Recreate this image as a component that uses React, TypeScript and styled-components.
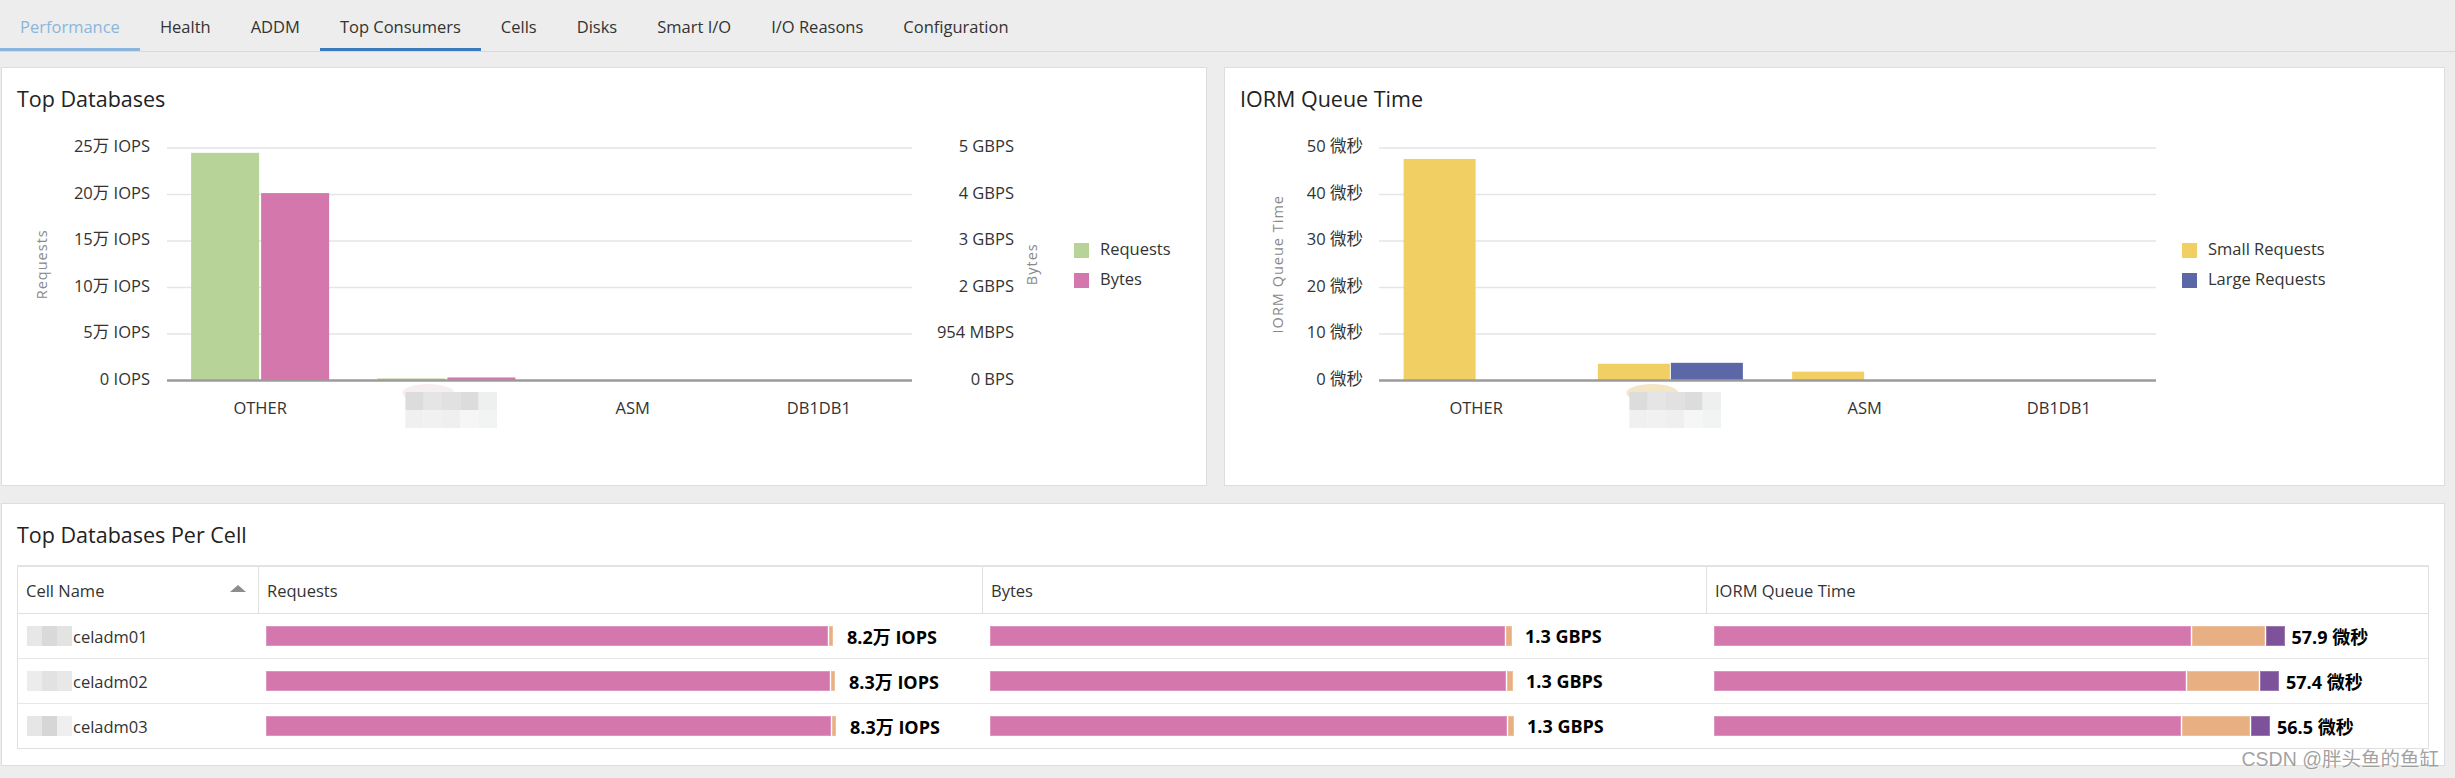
import React from 'react'
import styled, { createGlobalStyle } from 'styled-components'

const GlobalStyle = createGlobalStyle`
  html, body {
    margin: 0;
    padding: 0;
    background: #ededed;
  }
  body {
    font-family: "Open Sans", "Noto Sans CJK SC", sans-serif;
    color: #333;
  }
  * {
    box-sizing: border-box;
  }
`

const FONT = '"Open Sans", "Noto Sans CJK SC", sans-serif'

const tabs = [
  { label: 'Performance', state: 'visited' },
  { label: 'Health' },
  { label: 'ADDM' },
  { label: 'Top Consumers', state: 'active' },
  { label: 'Cells' },
  { label: 'Disks' },
  { label: 'Smart I/O' },
  { label: 'I/O Reasons' },
  { label: 'Configuration' },
] as { label: string; state?: 'active' | 'visited' }[]

type Series = { name: string; color: string; max: number; values: number[] }

type ChartConfig = {
  width: number
  plotX0: number
  plotX1: number
  barWidth: number
  barGap: number
  leftLabelX: number
  ticks: string[]
  rightLabelX?: number
  rightTicks?: string[]
  axisTitle: string
  axisTitleX: number
  rightTitle?: string
  rightTitleX?: number
  legendX: number
  categories: (string | null)[]
  series: Series[]
  smear: string
}

// vertical scale shared by both charts (px inside the svg)
const TOP = 19
const STEP = 46.5
const BASE = TOP + STEP * 5
const CHART_H = 356

const topDatabases: ChartConfig = {
  width: 1204,
  plotX0: 165,
  plotX1: 910,
  barWidth: 68,
  barGap: 2,
  leftLabelX: 148,
  ticks: ['25万 IOPS', '20万 IOPS', '15万 IOPS', '10万 IOPS', '5万 IOPS', '0 IOPS'],
  rightLabelX: 1012,
  rightTicks: ['5 GBPS', '4 GBPS', '3 GBPS', '2 GBPS', '954 MBPS', '0 BPS'],
  axisTitle: 'Requests',
  axisTitleX: 41,
  rightTitle: 'Bytes',
  rightTitleX: 1031,
  legendX: 1072,
  categories: ['OTHER', null, 'ASM', 'DB1DB1'],
  series: [
    { name: 'Requests', color: '#b7d397', max: 25, values: [24.48, 0.22, 0, 0] },
    { name: 'Bytes', color: '#d477ac', max: 5, values: [4.03, 0.065, 0, 0] },
  ],
  smear: '#f6eef2',
}

const iormQueue: ChartConfig = {
  width: 1219,
  plotX0: 154,
  plotX1: 931,
  barWidth: 72,
  barGap: 1,
  leftLabelX: 138,
  ticks: ['50 微秒', '40 微秒', '30 微秒', '20 微秒', '10 微秒', '0 微秒'],
  axisTitle: 'IORM Queue Time',
  axisTitleX: 54,
  legendX: 957,
  categories: ['OTHER', null, 'ASM', 'DB1DB1'],
  series: [
    { name: 'Small Requests', color: '#f2cf63', max: 50, values: [47.65, 3.6, 1.9, 0] },
    { name: 'Large Requests', color: '#5c67a8', max: 50, values: [0, 3.8, 0, 0] },
  ],
  smear: '#f3e6c4',
}

const mosaicTop = ['#dcdcdc', '#e5e5e5', '#e1e1e1', '#dcdcdc', '#eef0f0']
const mosaicBottom = ['#f0f0f0', '#f1f1f1', '#efefef', '#f6f6f6', '#f2f3f3']

type Row = {
  name: string
  mask: string[]
  requests: number[]
  requestsLabel: string
  bytes: number[]
  bytesLabel: string
  iorm: number[]
  iormLabel: string
}

const rows: Row[] = [
  {
    name: 'celadm01',
    mask: ['#e7e7e7', '#d9d9d9', '#e3e3e3'],
    requests: [562, 4],
    requestsLabel: '8.2万 IOPS',
    bytes: [515, 6],
    bytesLabel: '1.3 GBPS',
    iorm: [476.5, 73, 19],
    iormLabel: '57.9 微秒',
  },
  {
    name: 'celadm02',
    mask: ['#ececec', '#e2e2e2', '#e8e8e8'],
    requests: [564, 4],
    requestsLabel: '8.3万 IOPS',
    bytes: [516, 6],
    bytesLabel: '1.3 GBPS',
    iorm: [472, 72, 19],
    iormLabel: '57.4 微秒',
  },
  {
    name: 'celadm03',
    mask: ['#e6e6e6', '#d6d6d6', '#efefef'],
    requests: [565, 4],
    requestsLabel: '8.3万 IOPS',
    bytes: [517, 6],
    bytesLabel: '1.3 GBPS',
    iorm: [467, 68, 19],
    iormLabel: '56.5 微秒',
  },
]

const requestColors = ['#d477ac', '#e8b082']
const iormColors = ['#d477ac', '#e8b082', '#7e529b']

function BarChart({ c }: { c: ChartConfig }) {
  const band = (c.plotX1 - c.plotX0) / c.categories.length
  const n = c.series.length
  const groupW = n * c.barWidth + (n - 1) * c.barGap
  const span = BASE - TOP

  return (
    <ChartSvg width={c.width} height={CHART_H}>
      {c.ticks.map((t, i) => {
        const y = TOP + i * STEP
        return (
          <g key={t}>
            {i < 5 && (
              <line x1={c.plotX0} x2={c.plotX1} y1={y} y2={y} stroke="#e2e5e9" strokeWidth={1.5} />
            )}
            <text x={c.leftLabelX} y={y} textAnchor="end" dominantBaseline="middle">
              {t}
            </text>
            {c.rightTicks && (
              <text x={c.rightLabelX} y={y} textAnchor="end" dominantBaseline="middle">
                {c.rightTicks[i]}
              </text>
            )}
          </g>
        )
      })}

      <AxisTitle
        transform={`translate(${c.axisTitleX} ${TOP + span / 2}) rotate(-90)`}
        textAnchor="middle"
        dominantBaseline="middle"
      >
        {c.axisTitle}
      </AxisTitle>
      {c.rightTitle && (
        <AxisTitle
          transform={`translate(${c.rightTitleX} ${TOP + span / 2}) rotate(-90)`}
          textAnchor="middle"
          dominantBaseline="middle"
        >
          {c.rightTitle}
        </AxisTitle>
      )}

      {c.categories.map((cat, ci) => {
        const cx = c.plotX0 + band * ci + band / 2
        const x0 = cx - groupW / 2
        return (
          <g key={ci}>
            {c.series.map((s, si) => {
              const h = (s.values[ci] / s.max) * span
              if (h <= 0) return null
              return (
                <rect
                  key={s.name}
                  x={x0 + si * (c.barWidth + c.barGap)}
                  y={BASE - h}
                  width={c.barWidth}
                  height={h}
                  fill={s.color}
                />
              )
            })}
            {cat ? (
              <text x={cx} y={281} textAnchor="middle" dominantBaseline="middle">
                {cat}
              </text>
            ) : (
              <g>
                <ellipse cx={cx - 18} cy={264} rx={26} ry={9} fill={c.smear} />
                {mosaicTop.map((col, k) => (
                  <rect key={'t' + k} x={cx - 41 + k * 18.3} y={263} width={18.4} height={18} fill={col} />
                ))}
                {mosaicBottom.map((col, k) => (
                  <rect key={'b' + k} x={cx - 41 + k * 18.3} y={281} width={18.4} height={18} fill={col} />
                ))}
              </g>
            )}
          </g>
        )
      })}

      <line x1={c.plotX0} x2={c.plotX1} y1={BASE} y2={BASE} stroke="#9b9b9b" strokeWidth={2.5} />

      {c.series.map((s, si) => (
        <g key={s.name}>
          <rect x={c.legendX} y={114 + si * 30} width={15} height={15} fill={s.color} />
          <text x={c.legendX + 26} y={122 + si * 30} dominantBaseline="middle">
            {s.name}
          </text>
        </g>
      ))}
    </ChartSvg>
  )
}

function StackBar({ widths, colors, label, gap }: { widths: number[]; colors: string[]; label: string; gap: number }) {
  return (
    <BarCell>
      <Segments>
        {widths.map((w, i) => (
          <Segment key={i} $color={colors[i]} style={{ width: w }} />
        ))}
      </Segments>
      <BarValue $gap={gap}>{label}</BarValue>
    </BarCell>
  )
}

export default function App() {
  return (
    <Page>
      <GlobalStyle />
      <TabBar>
        {tabs.map(t => (
          <Tab key={t.label} $state={t.state}>
            {t.label}
          </Tab>
        ))}
      </TabBar>

      <Content>
        <ChartsRow>
          <Panel>
            <PanelTitle>Top Databases</PanelTitle>
            <BarChart c={topDatabases} />
          </Panel>
          <Panel>
            <PanelTitle>IORM Queue Time</PanelTitle>
            <BarChart c={iormQueue} />
          </Panel>
        </ChartsRow>

        <Panel>
          <PanelTitle>Top Databases Per Cell</PanelTitle>
          <Table>
            <HeaderRow>
              <HeadCell>
                Cell Name
                <SortArrow />
              </HeadCell>
              <HeadCell>Requests</HeadCell>
              <HeadCell>Bytes</HeadCell>
              <HeadCell>IORM Queue Time</HeadCell>
            </HeaderRow>
            {rows.map(r => (
              <BodyRow key={r.name}>
                <NameCell>
                  <Mask>
                    {r.mask.map((m, i) => (
                      <MaskBlock key={i} $color={m} />
                    ))}
                  </Mask>
                  {r.name}
                </NameCell>
                <StackBar widths={r.requests} colors={requestColors} label={r.requestsLabel} gap={14} />
                <StackBar widths={r.bytes} colors={requestColors} label={r.bytesLabel} gap={13} />
                <StackBar widths={r.iorm} colors={iormColors} label={r.iormLabel} gap={7} />
              </BodyRow>
            ))}
          </Table>
        </Panel>
      </Content>

      <Watermark>CSDN @胖头鱼的鱼缸</Watermark>
    </Page>
  )
}

const Page = styled.div`
  position: relative;
  width: 2455px;
  height: 778px;
  overflow: hidden;
  background: #ededed;
`

const TabBar = styled.nav`
  display: flex;
  height: 52px;
  border-bottom: 1px solid #d9d9d9;
`

const Tab = styled.div<{ $state?: 'active' | 'visited' }>`
  display: flex;
  align-items: center;
  height: 51px;
  padding: 4px 20px 0;
  font-size: 16.5px;
  white-space: nowrap;
  color: ${p => (p.$state === 'visited' ? '#8ab6dd' : '#333')};
  border-bottom: 3px solid
    ${p => (p.$state === 'active' ? '#3a7bbf' : p.$state === 'visited' ? '#8ab6dd' : 'transparent')};
`

const Content = styled.main`
  display: grid;
  grid-template-rows: 419px 263px;
  row-gap: 17px;
  padding: 15px 10px 0 1px;
`

const ChartsRow = styled.div`
  display: grid;
  grid-template-columns: 1206px 1fr;
  column-gap: 17px;
`

const Panel = styled.section`
  display: flex;
  flex-direction: column;
  min-width: 0;
  background: #fff;
  border: 1px solid #dedede;
`

const PanelTitle = styled.h2`
  margin: 0;
  height: 61px;
  padding: 16px 15px 0;
  font-size: 21.5px;
  font-weight: 400;
  line-height: 30px;
  color: #222;
`

const ChartSvg = styled.svg`
  display: block;
  font-family: ${FONT};
  font-size: 16.5px;
  fill: #333;
`

const AxisTitle = styled.text`
  font-size: 14.5px;
  letter-spacing: 1px;
  fill: #8a8a8a;
`

const Table = styled.div`
  margin: 0 15px;
  border: 1px solid #e0e0e0;
  border-top: 2px solid #e3e3e3;
  font-size: 16.5px;
`

const columns = '240px 724px 724px 1fr'

const HeaderRow = styled.div`
  display: grid;
  grid-template-columns: ${columns};
  height: 47px;
  border-bottom: 1px solid #e0e0e0;
`

const HeadCell = styled.div`
  display: flex;
  align-items: center;
  justify-content: space-between;
  padding: 0 12px 0 8px;
  color: #333;
  & + & {
    border-left: 1px solid #e0e0e0;
  }
`

const SortArrow = styled.span`
  width: 0;
  height: 0;
  margin-top: -4px;
  border-left: 8px solid transparent;
  border-right: 8px solid transparent;
  border-bottom: 7px solid #8c8c8c;
`

const BodyRow = styled.div`
  display: grid;
  grid-template-columns: ${columns};
  height: 45px;
  border-bottom: 1px solid #e6e6e6;
  &:last-child {
    height: 44px;
    border-bottom: none;
  }
`

const NameCell = styled.div`
  display: flex;
  align-items: center;
  padding-left: 9px;
  color: #333;
`

const Mask = styled.span`
  display: flex;
  margin-right: 1px;
`

const MaskBlock = styled.span<{ $color: string }>`
  width: 15px;
  height: 20px;
  background: ${p => p.$color};
`

const BarCell = styled.div`
  display: flex;
  align-items: center;
  padding-left: 8px;
  min-width: 0;
`

const Segments = styled.div`
  display: flex;
  gap: 1px;
  height: 20px;
`

const Segment = styled.span<{ $color: string }>`
  height: 100%;
  background: ${p => p.$color};
  box-shadow: inset 0 0 0 1px rgba(255, 255, 255, 0.22);
`

const BarValue = styled.span<{ $gap: number }>`
  margin-left: ${p => p.$gap}px;
  font-size: 18px;
  font-weight: 700;
  color: #000;
  white-space: nowrap;
`

const Watermark = styled.div`
  position: absolute;
  right: 16px;
  bottom: 6px;
  font-family: "Liberation Sans", "Noto Sans CJK SC", sans-serif;
  font-size: 19.5px;
  color: rgba(120, 120, 120, 0.7);
  text-shadow: 0 0 2px #fff;
  white-space: nowrap;
`
